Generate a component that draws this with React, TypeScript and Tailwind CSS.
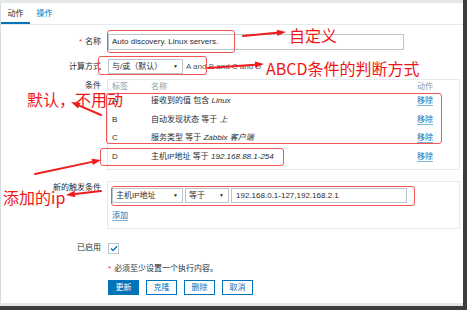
import type { ReactNode } from "react";

const conditions = [
  { tag: "A", name: "接收到的值 包含 ", value: "Linux" },
  { tag: "B", name: "自动发现状态 等于 ", value: "上" },
  { tag: "C", name: "服务类型 等于 ", value: "Zabbix 客户端" },
  { tag: "D", name: "主机IP地址 等于 ", value: "192.168.88.1-254" },
];

function FormRow({
  label,
  required,
  top,
  children,
}: {
  label: string;
  required?: boolean;
  top?: boolean;
  children: ReactNode;
}) {
  return (
    <div className={top ? "flex items-start" : "flex items-center"}>
      <div
        className={
          "w-[106px] shrink-0 pr-[6px] text-right leading-[12px] " + (top ? "pt-[1px]" : "")
        }
      >
        {required ? <span className="mr-[3px] text-[#e33734]">*</span> : null}
        {label}
      </div>
      {children}
    </div>
  );
}

function Select({ value, className }: { value: string; className: string }) {
  return (
    <div
      className={
        "flex h-[15px] items-center justify-between border border-[#b9c6cc] bg-white pl-[3px] pr-[4px] " +
        className
      }
    >
      <span>{value}</span>
      <span className="text-[5px]">▼</span>
    </div>
  );
}

function Mark({ l, t, w, h }: { l: number; t: number; w: number; h: number }) {
  return (
    <div
      className="absolute rounded-[3px] border-[1.5px] border-[#f05454]"
      style={{ left: l, top: t, width: w, height: h }}
    />
  );
}

function Arrow({ x1, y1, x2, y2 }: { x1: number; y1: number; x2: number; y2: number }) {
  // line from (x1,y1) with the head sitting on (x2,y2)
  const a = Math.atan2(y2 - y1, x2 - x1);
  const len = 9;
  const half = 3.2;
  const bx = x2 - Math.cos(a) * len;
  const by = y2 - Math.sin(a) * len;
  const px = -Math.sin(a) * half;
  const py = Math.cos(a) * half;
  return (
    <g>
      <line x1={x1} y1={y1} x2={bx} y2={by} stroke="#ee1c1c" strokeWidth={2} strokeLinecap="round" />
      <polygon points={`${x2},${y2} ${bx + px},${by + py} ${bx - px},${by - py}`} fill="#ee1c1c" />
    </g>
  );
}

function Annotations() {
  return (
    <div className="pointer-events-none absolute inset-0 text-[#f01616] font-['Noto_Sans_CJK_SC','Liberation_Sans',sans-serif]">
      <Mark l={107} t={30} w={128} h={23} />
      <Mark l={98} t={56} w={109} h={19} />
      <Mark l={106} t={93} w={336} h={51} />
      <Mark l={100} t={148} w={184} h={18} />
      <Mark l={111} t={186} w={304} h={20} />

      <div className="absolute left-[289px] top-[26px] text-[16px] leading-[18px]">自定义</div>
      <div className="absolute left-[266px] top-[58px] text-[16px] leading-[20px]">ABCD条件的判断方式</div>
      <div className="absolute left-[27px] top-[89px] text-[16px] leading-[20px]">默认，不用动</div>
      <div className="absolute left-[3px] top-[187px] text-[16px] leading-[20px]">添加的ip</div>

      <svg className="absolute inset-0" width={467} height={310}>
        <Arrow x1={243} y1={36} x2={286} y2={32} />
        <Arrow x1={208} y1={68} x2={264} y2={64} />
        <Arrow x1={101} y1={115} x2={71} y2={102} />
        <Arrow x1={35} y1={174} x2={101} y2={160} />
        <Arrow x1={101} y1={191} x2={66} y2={195} />
      </svg>
    </div>
  );
}

export default function App() {
  return (
    <div className="relative h-[310px] w-[467px] overflow-hidden bg-[#3d3d3d] text-[8px] text-[#1f2c33] font-['Liberation_Sans','Noto_Sans_CJK_SC',sans-serif]">
      <div className="h-[306px] w-[463px] bg-[#e4e8eb] py-[3px]">
        <div className="flex h-full flex-col border-l border-[#d6dde1] bg-white">
          {/* tabs */}
          <div className="flex h-[22px] shrink-0 border-b border-[#e6eaed]">
            <div className="flex w-[29px] items-center justify-center shadow-[inset_0_-2px_0_#0275b8]">
              动作
            </div>
            <div className="flex w-[29px] items-center justify-center text-[#0275b8]">操作</div>
          </div>

          {/* form */}
          <div className="flex flex-col pt-[9px]">
            <FormRow label="名称" required>
              <div className="ml-px flex h-[16px] w-[296px] items-center border border-[#b9c6cc] px-[3px]">
                Auto discovery. Linux servers.
              </div>
            </FormRow>

            <div className="mt-[9px]">
              <FormRow label="计算方式">
                <Select value="与/或（默认）" className="ml-px w-[75px]" />
                <span className="ml-[3px] text-[#4f5b61]">A and B and C and D</span>
              </FormRow>
            </div>

            <div className="mt-[5px]">
              <FormRow label="条件" top>
                <div className="w-[353px] border border-[#e6eaed] pb-[3px] pt-[1px] pl-[4px]">
                  <div className="flex h-[11px] items-center text-[#8a9ba4]">
                    <span className="w-[39px]">标签</span>
                    <span className="w-[266px]">名称</span>
                    <span>动作</span>
                  </div>
                  {conditions.map((c) => (
                    <div key={c.tag} className="flex h-[18.5px] items-center">
                      <span className="w-[39px]">{c.tag}</span>
                      <span className="w-[266px]">
                        {c.name}
                        <i>{c.value}</i>
                      </span>
                      <span className="border-b border-[#7fb6d8] leading-[9px] text-[#0275b8]">移除</span>
                    </div>
                  ))}
                </div>
              </FormRow>
            </div>

            <div className="mt-[11px]">
              <FormRow label="新的触发条件" top>
                <div className="h-[48px] w-[353px] border border-[#e6eaed] pl-[4px] pt-[6px]">
                  <div className="flex gap-[2px]">
                    <Select value="主机IP地址" className="w-[71px]" />
                    <Select value="等于" className="w-[44px]" />
                    <div className="flex h-[15px] w-[176px] items-center border border-[#b9c6cc] pl-[4px]">
                      192.168.0.1-127,192.168.2.1
                    </div>
                  </div>
                  <div className="mt-[8px] flex">
                    <span className="border-b border-[#7fb6d8] leading-[9px] text-[#0275b8]">添加</span>
                  </div>
                </div>
              </FormRow>
            </div>

            <div className="mt-[13px]">
              <FormRow label="已启用">
                <div className="ml-px flex h-[11px] w-[11px] items-center justify-center border border-[#b9c6cc]">
                  <svg width="8" height="7" viewBox="0 0 8 7">
                    <path d="M1 3.6 L3.1 5.6 L7 1.2" fill="none" stroke="#0275b8" strokeWidth="1.4" />
                  </svg>
                </div>
              </FormRow>
            </div>

            <div className="ml-[107px] mt-[10px] leading-[10px]">
              <span className="mr-[3px] text-[#e33734]">*</span>必须至少设置一个执行内容。
            </div>

            <div className="ml-[107px] mt-[6px] flex gap-[7px]">
              <div className="flex h-[15px] w-[31px] items-center justify-center bg-[#0275b8] text-white">更新</div>
              <div className="flex h-[15px] w-[31px] items-center justify-center border border-[#0275b8] text-[#0275b8]">克隆</div>
              <div className="flex h-[15px] w-[31px] items-center justify-center border border-[#0275b8] text-[#0275b8]">删除</div>
              <div className="flex h-[15px] w-[31px] items-center justify-center border border-[#0275b8] text-[#0275b8]">取消</div>
            </div>
          </div>
        </div>
      </div>
      <Annotations />
    </div>
  );
}
